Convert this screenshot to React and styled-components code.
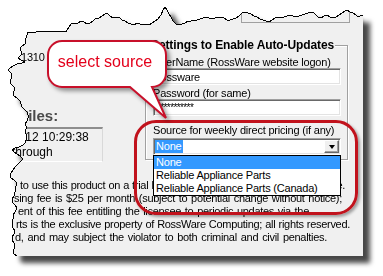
import React from 'react';
import styled, { createGlobalStyle } from 'styled-components';

const GlobalStyle = createGlobalStyle`
  html, body { margin: 0; padding: 0; background: #ffffff; }
  body { font-family: "Liberation Sans", Arial, sans-serif; }
`;

const OX = 8;
const OY = 7;

const parse = (s) =>
  s.trim().split(/\s+/).map((p) => p.split(',').map(Number));

const TOP = parse(`
27,33 31,32 34,33 38,31 42,32 46,31 50,32 54,31 58,32 62,31 66,32 69,27 72,23 75,24 78,23 81,21 84,22 87,24 90,23 93,21
96,18 99,18 102,16 105,14 107,13 110,16 113,18 116,17 119,17 122,20 125,21 128,23 131,24 134,25 137,23 140,24 143,25
146,24 149,25 152,23 155,21 158,19 161,15 163,10 165,7 167,10 169,14 171,17 173,21 176,24 179,25 182,24 185,23 188,21
191,21 194,20 197,20 200,19 203,18 206,17 209,18 212,18 215,18 218,17 221,17 224,18 227,20 230,20 233,19 236,18 239,16
242,13 245,12 248,13 251,14 254,16 257,17 260,19 263,20 266,21 269,22 272,20 275,18 278,17 281,17 284,17 287,16 290,15
293,16 296,17 299,16 302,15 305,14 308,13 311,12 313,12 315,14 318,17 321,18 324,16 327,15 330,17 333,18 336,17 339,15
342,13 345,11 347,10 350,12 353,13 356,15 358,17 360,16 363,15
`);

const LEFT = parse(`
17,256 14,254 13,252 14,249 15,246 14,243 12,240 12,237 14,234 15,231 13,228 12,225 12,222 13,219 13,215 15,212 17,208
15,205 12,202 12,199 14,196 15,192 15,189 16,186 17,183 14,180 11,178 10,176 11,173 13,170 15,167 18,164 21,161 23,159
20,156 17,154 14,152 12,150 15,148 19,147 23,145 25,143 26,140 27,137 26,134 25,132 26,129 26,126 25,124 27,121 28,118
28,115 27,112 25,110 22,107 21,104 20,101 17,98 14,96 13,94 14,91 15,88 13,86 11,84 10,82 11,79 12,76 11,73 8,70 10,68
13,66 17,64 22,63 25,62 21,60 18,58 20,56 22,54 21,51 20,48 22,46 25,44 25,41 26,38 27,35 27,33
`);

const SHAPE = [...TOP, [363, 256], ...LEFT]
  .map(([x, y]) => `${x - OX}px ${y - OY}px`)
  .join(', ');

const OUTLINE = [...LEFT, ...TOP.slice(1)].map(([x, y]) => `${x},${y}`).join(' ');

const Stage = styled.div`
  position: relative;
  width: 383px;
  height: 276px;
  box-sizing: border-box;
  padding: 7px 0 0 8px;
  overflow: hidden;
  background: #ffffff;
`;

const TornWrap = styled.div`
  position: relative;
  width: 355px;
  height: 249px;
  filter: drop-shadow(7px 7px 2.5px rgba(0, 0, 0, 0.72));
`;

const Panel = styled.div`
  width: 100%;
  height: 100%;
  background: #f0f0f0;
  clip-path: polygon(${SHAPE});
  display: flex;
  flex-direction: column;
  font-family: "Liberation Sans", Arial, sans-serif;
  font-size: 11px;
  color: #000;
  overflow: hidden;
`;

const TornEdge = styled.svg`
  position: absolute;
  left: 0;
  top: 0;
  overflow: visible;
  pointer-events: none;
`;

const TabEdge = styled.div`
  flex-shrink: 0;
  margin-left: 233px;
  width: 107px;
  height: 15px;
  border: 1px solid #a0a0a0;
  border-top: none;
`;

const TopRow = styled.div`
  display: flex;
  align-items: flex-start;
  flex-shrink: 0;
`;

const LeftCol = styled.div`
  width: 137px;
  flex-shrink: 0;
  display: flex;
  flex-direction: column;
`;

const IdText = styled.div`
  margin: 28px 0 0 13px;
  line-height: 13px;
  letter-spacing: -0.2px;
`;

const FilesLabel = styled.div`
  margin: 43px 0 0 11px;
  font-size: 15px;
  font-weight: bold;
  line-height: 17px;
  color: #4a4a4a;
`;

const DateBox = styled.div`
  margin: 3px 0 0 -20px;
  width: 115px;
  height: 35px;
  box-sizing: border-box;
  padding: 1px 0 0 24px;
  border-top: 2px solid #8e8e8e;
  border-right: 1px solid #d9d9d9;
  border-bottom: 1px solid #ffffff;
  font-size: 12px;
  line-height: 15px;
  white-space: nowrap;
`;

const GroupBox = styled.div`
  position: relative;
  margin-top: 22px;
  width: 203px;
  flex-shrink: 0;
  box-sizing: border-box;
  padding: 10px 6px 4px 7px;
  border: 1px solid #a0a0a0;
  box-shadow: inset 1px 1px 0 #ffffff, 1px 1px 0 #ffffff;
  display: flex;
  flex-direction: column;
`;

const GroupTitle = styled.div`
  position: absolute;
  top: -7px;
  left: 4px;
  padding: 0 1px;
  background: #f0f0f0;
  font-size: 12px;
  font-weight: bold;
  line-height: 13px;
  letter-spacing: -0.1px;
  white-space: nowrap;
`;

const Label = styled.div`
  margin-top: ${(p) => p.$gap || 0}px;
  line-height: 12px;
  letter-spacing: -0.2px;
  white-space: nowrap;
`;

const inset = `
  box-sizing: border-box;
  height: 17px;
  border: 1px solid;
  border-color: #a0a0a0 #ffffff #ffffff #a0a0a0;
  box-shadow: inset 1px 1px 0 #696969, inset -1px -1px 0 #e3e3e3;
  background: #ffffff;
`;

const TextField = styled.div`
  ${inset}
  padding: 1px 0 0 3px;
  line-height: 14px;
  letter-spacing: ${(p) => (p.$secret ? '-0.6px' : '-0.2px')};
  font-size: ${(p) => (p.$secret ? '10px' : '11px')};
  white-space: nowrap;
  overflow: hidden;
`;

const Combo = styled.div`
  ${inset}
  position: relative;
  margin-top: 2px;
  padding: 1px;
  display: flex;
  align-items: center;
`;

const Selection = styled.span`
  background: #3399ff;
  color: #ffffff;
  line-height: 13px;
  padding: 0 1px;
  letter-spacing: -0.2px;
`;

const ArrowButton = styled.div`
  margin-left: auto;
  width: 15px;
  height: 13px;
  box-sizing: border-box;
  background: #f0f0f0;
  border: 1px solid;
  border-color: #ffffff #696969 #696969 #ffffff;
  box-shadow: inset -1px -1px 0 #a0a0a0;
  display: flex;
  align-items: center;
  justify-content: center;
`;

const Arrow = styled.span`
  width: 0;
  height: 0;
  border-style: solid;
  border-width: 4px 3.5px 0 3.5px;
  border-color: #000 transparent transparent transparent;
  margin-top: 1px;
`;

const DropList = styled.div`
  position: absolute;
  top: calc(100% + 1px);
  left: -1px;
  width: 188px;
  box-sizing: border-box;
  border: 1px solid #000;
  background: #ffffff;
  z-index: 2;
`;

const Option = styled.div`
  line-height: 13px;
  padding-left: 2px;
  letter-spacing: -0.2px;
  white-space: nowrap;
  background: ${(p) => (p.$active ? '#3399ff' : '#ffffff')};
  color: ${(p) => (p.$active ? '#ffffff' : '#000000')};
`;

const Paragraph = styled.div`
  margin-top: 17px;
  display: flex;
  flex-direction: column;
`;

const Line = styled.div`
  box-sizing: border-box;
  width: ${(p) => p.$end - 8}px;
  padding-left: ${(p) => p.$indent}px;
  line-height: 13px;
  height: 13px;
  letter-spacing: -0.3px;
  text-align: justify;
  text-align-last: justify;
`;

const Highlight = styled.div`
  position: absolute;
  left: 134px;
  top: 120px;
  width: 224px;
  height: 95px;
  box-sizing: border-box;
  border: 3px solid #c1121c;
  border-radius: 22px;
  box-shadow: 2px 2px 3px rgba(0, 0, 0, 0.35);
  z-index: 3;
  pointer-events: none;
`;

const Callout = styled.div`
  position: absolute;
  left: 44px;
  top: 37px;
  width: 130px;
  height: 90px;
  z-index: 4;
`;

const BubbleShape = styled.svg`
  display: block;
  overflow: visible;
  filter: drop-shadow(3px 3px 2px rgba(0, 0, 0, 0.4));
`;

const BubbleText = styled.div`
  position: absolute;
  left: 4px;
  top: 4px;
  width: 118px;
  height: 46px;
  box-sizing: border-box;
  padding: 0 4px 4px 0;
  display: flex;
  align-items: center;
  justify-content: center;
  font-family: "Liberation Sans", Arial, sans-serif;
  font-size: 16px;
  color: #e3001b;
  white-space: nowrap;
`;

const OPTIONS = ['None', 'Reliable Appliance Parts', 'Reliable Appliance Parts (Canada)'];

const LINES = [
  { indent: 12, end: 345, text: 'to use this product on a trial basis for seventy days free of any charge.' },
  { indent: 6, end: 342, text: 'sing fee is $25 per month (subject to potential change without notice);' },
  { indent: 10, end: 309, text: 'ent of this fee entitling the licensee to periodic updates via the' },
  { indent: 8, end: 350, text: 'rts is the exclusive property of RossWare Computing; all rights reserved.' },
  { indent: 7, end: 327, text: 'd, and may subject the violator to both criminal and civil penalties.' },
];

export default function App() {
  return (
    <>
      <GlobalStyle />
      <Stage>
        <TornWrap>
          <Panel>
            <TabEdge />
            <TopRow>
              <LeftCol>
                <IdText>1310</IdText>
                <FilesLabel>Files:</FilesLabel>
                <DateBox>
                  <div>2012 10:29:38</div>
                  <div>through</div>
                </DateBox>
              </LeftCol>
              <GroupBox>
                <GroupTitle>Settings to Enable Auto-Updates</GroupTitle>
                <Label>UserName (RossWare website logon)</Label>
                <TextField>rossware</TextField>
                <Label $gap={2}>Password (for same)</Label>
                <TextField $secret>***********</TextField>
                <Label $gap={8}>Source for weekly direct pricing (if any)</Label>
                <Combo>
                  <Selection>None</Selection>
                  <ArrowButton>
                    <Arrow />
                  </ArrowButton>
                  <DropList>
                    {OPTIONS.map((o, i) => (
                      <Option key={o} $active={i === 0}>
                        {o}
                      </Option>
                    ))}
                  </DropList>
                </Combo>
              </GroupBox>
            </TopRow>
            <Paragraph>
              {LINES.map((l) => (
                <Line key={l.text} $indent={l.indent} $end={l.end}>
                  {l.text}
                </Line>
              ))}
            </Paragraph>
          </Panel>
          <TornEdge width="355" height="249" viewBox="8 7 355 249">
            <polyline
              points={OUTLINE}
              fill="none"
              stroke="#000"
              strokeWidth="1"
              shapeRendering="crispEdges"
            />
          </TornEdge>
        </TornWrap>

        <Highlight />

        <Callout>
          <BubbleShape width="130" height="90" viewBox="44 37 130 90">
            <path
              d="M 62 41 H 152 A 14 14 0 0 1 166 55 V 73 A 14 14 0 0 1 152 87 L 166 118 L 130 87 H 62 A 14 14 0 0 1 48 73 V 55 A 14 14 0 0 1 62 41 Z"
              fill="#ffffff"
              stroke="#c8102a"
              strokeWidth="2"
              strokeLinejoin="miter"
            />
          </BubbleShape>
          <BubbleText>select source</BubbleText>
        </Callout>
      </Stage>
    </>
  );
}
